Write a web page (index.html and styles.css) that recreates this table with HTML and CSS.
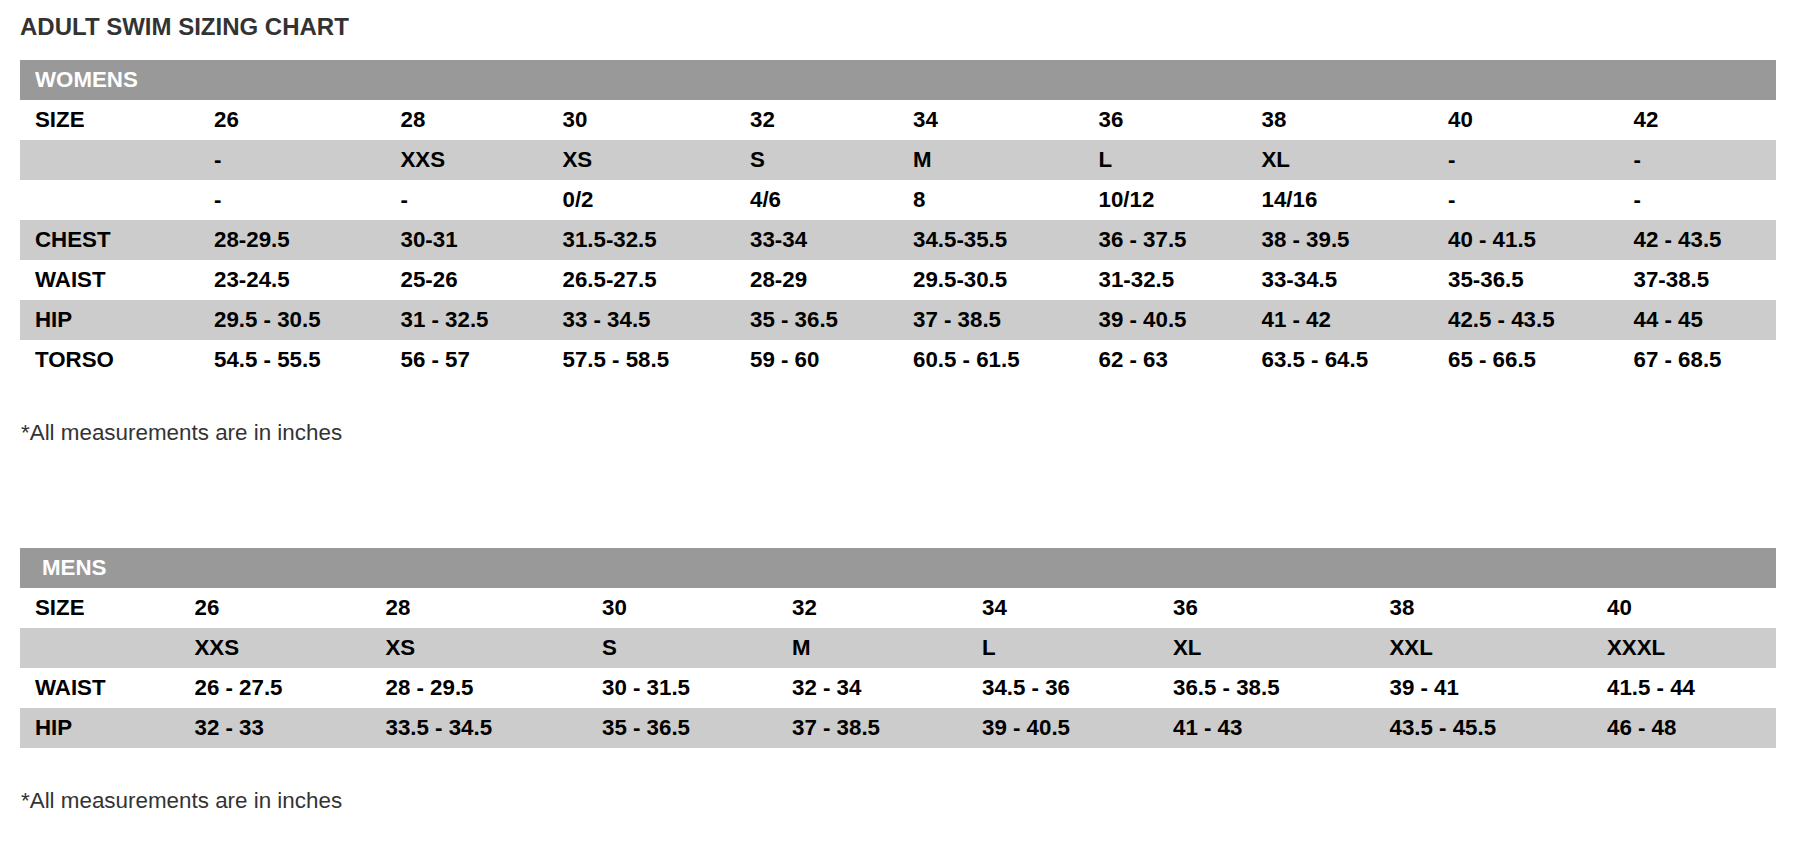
FILE: index.html
```html
<!DOCTYPE html>
<html lang="en">
<head>
<meta charset="utf-8">
<title>Adult Swim Sizing Chart</title>
<link rel="stylesheet" href="styles.css">
</head>
<body>
<div class="page">
  <h1 class="title">ADULT SWIM SIZING CHART</h1>

  <table class="chart">
    <colgroup>
      <col class="w179"><col class="w186"><col class="w162"><col class="w188"><col class="w163"><col class="w185"><col class="w163"><col class="w186"><col class="w185"><col class="w158">
    </colgroup>
    <tr class="band"><th colspan="10">WOMENS</th></tr>
    <tr><td>SIZE</td><td>26</td><td>28</td><td>30</td><td>32</td><td>34</td><td>36</td><td>38</td><td>40</td><td>42</td></tr>
    <tr class="alt"><td></td><td>-</td><td>XXS</td><td>XS</td><td>S</td><td>M</td><td>L</td><td>XL</td><td>-</td><td>-</td></tr>
    <tr><td></td><td>-</td><td>-</td><td>0/2</td><td>4/6</td><td>8</td><td>10/12</td><td>14/16</td><td>-</td><td>-</td></tr>
    <tr class="alt"><td>CHEST</td><td>28-29.5</td><td>30-31</td><td>31.5-32.5</td><td>33-34</td><td>34.5-35.5</td><td>36 - 37.5</td><td>38 - 39.5</td><td>40 - 41.5</td><td>42 - 43.5</td></tr>
    <tr><td>WAIST</td><td>23-24.5</td><td>25-26</td><td>26.5-27.5</td><td>28-29</td><td>29.5-30.5</td><td>31-32.5</td><td>33-34.5</td><td>35-36.5</td><td>37-38.5</td></tr>
    <tr class="alt"><td>HIP</td><td>29.5 - 30.5</td><td>31 - 32.5</td><td>33 - 34.5</td><td>35 - 36.5</td><td>37 - 38.5</td><td>39 - 40.5</td><td>41 - 42</td><td>42.5 - 43.5</td><td>44 - 45</td></tr>
    <tr><td>TORSO</td><td>54.5 - 55.5</td><td>56 - 57</td><td>57.5 - 58.5</td><td>59 - 60</td><td>60.5 - 61.5</td><td>62 - 63</td><td>63.5 - 64.5</td><td>65 - 66.5</td><td>67 - 68.5</td></tr>
  </table>

  <p class="note">*All measurements are in inches</p>

  <table class="chart chart-mens">
    <colgroup>
      <col class="m160"><col class="m191"><col class="m216"><col class="m190"><col class="m190"><col class="m191"><col class="m216"><col class="m217"><col class="m184">
    </colgroup>
    <tr class="band band-mens"><th colspan="9">MENS</th></tr>
    <tr><td>SIZE</td><td>26</td><td>28</td><td>30</td><td>32</td><td>34</td><td>36</td><td>38</td><td>40</td></tr>
    <tr class="alt"><td></td><td>XXS</td><td>XS</td><td>S</td><td>M</td><td>L</td><td>XL</td><td>XXL</td><td>XXXL</td></tr>
    <tr><td>WAIST</td><td>26 - 27.5</td><td>28 - 29.5</td><td>30 - 31.5</td><td>32 - 34</td><td>34.5 - 36</td><td>36.5 - 38.5</td><td>39 - 41</td><td>41.5 - 44</td></tr>
    <tr class="alt"><td>HIP</td><td>32 - 33</td><td>33.5 - 34.5</td><td>35 - 36.5</td><td>37 - 38.5</td><td>39 - 40.5</td><td>41 - 43</td><td>43.5 - 45.5</td><td>46 - 48</td></tr>
  </table>

  <p class="note">*All measurements are in inches</p>
</div>
</body>
</html>
```

FILE: styles.css
```css
html, body {
  margin: 0;
  padding: 0;
  background: #ffffff;
}

body {
  font-family: "Liberation Sans", Arial, sans-serif;
  color: #000;
}

.page {
  padding: 13px 0 0 20px;
  width: 1755px;
}

.title {
  margin: 0 0 19px 0;
  font-size: 24px;
  line-height: 28px;
  font-weight: bold;
  color: #333333;
}

.chart {
  width: 1755px;
  border-collapse: collapse;
  border-spacing: 0;
  table-layout: fixed;
}

.chart th,
.chart td {
  height: 40px;
  padding: 0 0 0 15px;
  line-height: 40px;
  font-size: 22.3px;
  font-weight: bold;
  text-align: left;
  white-space: nowrap;
  vertical-align: middle;
}

.band th {
  background: #999999;
  color: #ffffff;
}

.band-mens th {
  padding-left: 22px;
}

.alt td {
  background: #cccccc;
}

.note {
  margin: 40px 0 103px 1px;
  font-size: 22.4px;
  line-height: 25px;
  color: #333333;
}

.chart-mens + .note {
  margin-bottom: 0;
}

/* womens column widths */
.w179 { width: 179px; }
.w186 { width: 186.5px; }
.w162 { width: 162px; }
.w188 { width: 187.5px; }
.w163 { width: 163px; }
.w185 { width: 185.5px; }
.w158 { width: 157.5px; }

/* mens column widths */
.m160 { width: 159.5px; }
.m191 { width: 191px; }
.m216 { width: 216.5px; }
.m190 { width: 190px; }
.m217 { width: 217.5px; }
.m184 { width: 183.5px; }
```
